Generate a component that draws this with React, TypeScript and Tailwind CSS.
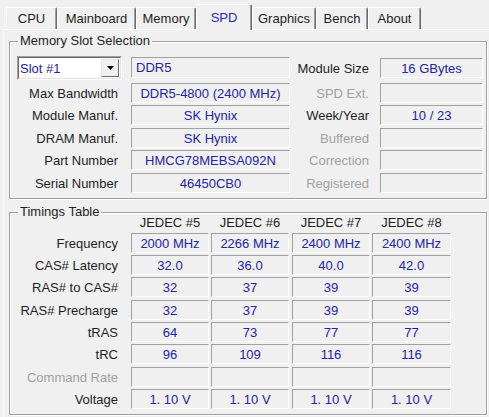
import React from 'react';
import clsx from 'clsx';

const tabs = [
  { label: 'CPU', w: 'w-[51px]' },
  { label: 'Mainboard', w: 'w-[79px]' },
  { label: 'Memory', w: 'w-[60px]' },
  { label: 'SPD', w: 'w-[56px]', active: true },
  { label: 'Graphics', w: 'w-[64px]' },
  { label: 'Bench', w: 'w-[52px]' },
  { label: 'About', w: 'w-[53px]' },
];

const slotRows = [
  { label: 'Max Bandwidth', value: 'DDR5-4800 (2400 MHz)', right: 'SPD Ext.', rightValue: '', dim: true, h: 'h-[22px]' },
  { label: 'Module Manuf.', value: 'SK Hynix', right: 'Week/Year', rightValue: '10 / 23', dim: false, h: 'h-[23px]' },
  { label: 'DRAM Manuf.', value: 'SK Hynix', right: 'Buffered', rightValue: '', dim: true, h: 'h-[22px]' },
  { label: 'Part Number', value: 'HMCG78MEBSA092N', right: 'Correction', rightValue: '', dim: true, h: 'h-[23px]' },
  { label: 'Serial Number', value: '46450CB0', right: 'Registered', rightValue: '', dim: true, h: 'h-[20px]' },
];

const cols = [
  { ml: 'ml-[13px]', w: 'w-[78px]', head: 'JEDEC #5' },
  { ml: 'ml-[2px]', w: 'w-[78px]', head: 'JEDEC #6' },
  { ml: 'ml-[3px]', w: 'w-[78px]', head: 'JEDEC #7' },
  { ml: 'ml-[2px]', w: 'w-[79px]', head: 'JEDEC #8' },
];

const timings = [
  { label: 'Frequency', vals: ['2000 MHz', '2266 MHz', '2400 MHz', '2400 MHz'], h: 'h-[22px]' },
  { label: 'CAS# Latency', vals: ['32.0', '36.0', '40.0', '42.0'], h: 'h-[22px]' },
  { label: 'RAS# to CAS#', vals: ['32', '37', '39', '39'], h: 'h-[23px]' },
  { label: 'RAS# Precharge', vals: ['32', '37', '39', '39'], h: 'h-[22px]' },
  { label: 'tRAS', vals: ['64', '73', '77', '77'], h: 'h-[22px]' },
  { label: 'tRC', vals: ['96', '109', '116', '116'], h: 'h-[23px]' },
  { label: 'Command Rate', vals: ['', '', '', ''], h: 'h-[22px]', dim: true },
  { label: 'Voltage', vals: ['1. 10 V', '1. 10 V', '1. 10 V', '1. 10 V'], h: 'h-[20px]' },
];

const Box: React.FC<{ className?: string; left?: boolean; children?: React.ReactNode }> = ({ className, left, children }) => (
  <div
    className={clsx(
      'flex items-center shrink-0 whitespace-nowrap border border-t-[#a0a0a0] border-l-[#a0a0a0] border-r-white border-b-white text-[#2323a8]',
      left ? 'pl-[4px]' : 'justify-center',
      className,
    )}
  >
    {children}
  </div>
);

const groupCls =
  'flex flex-col ml-[5px] w-[478px] border border-[#a0a0a0] shadow-[inset_1px_1px_0_#fff,1px_1px_0_#fff]';
const legendCls = 'ml-[8px] px-[2px] bg-[#f0f0f0] leading-[16px]';

export default function App() {
  return (
    <div className="w-[489px] h-[417px] overflow-hidden bg-[#f0f0f0] text-[13px] leading-none text-[#1e1e1e] font-['Liberation_Sans',Arial,sans-serif]">
      {/* tab strip */}
      <div className="flex items-end h-[29px] pl-[6px]">
        {tabs.map((t) =>
          t.active ? (
            <div
              key={t.label}
              className={clsx(
                t.w,
                'relative z-10 -mb-px h-[26px] flex items-center justify-center pb-[1px] bg-[#f0f0f0] border-t border-l border-r border-t-white border-l-white border-r-[#696969] shadow-[inset_-1px_0_0_#a0a0a0] rounded-t-[2px] text-[#2a2ab8]',
              )}
            >
              {t.label}
            </div>
          ) : (
            <div
              key={t.label}
              className={clsx(
                t.w,
                'h-[22px] flex items-center justify-center border-t border-l border-r border-t-white border-l-white border-r-[#696969] shadow-[inset_-1px_0_0_#a0a0a0] rounded-t-[2px]',
              )}
            >
              {t.label}
            </div>
          ),
        )}
      </div>

      {/* tab page */}
      <div className="ml-[3px] h-[388px] border-t border-l border-white">
        <fieldset className={clsx(groupCls, 'mt-[3px] h-[166px] pt-[7px]')}>
          <legend className={legendCls}>Memory Slot Selection</legend>

          <div className="flex items-start h-[27px]">
            <div className="ml-[7px] w-[105px] h-[24px] flex border border-t-[#a0a0a0] border-l-[#a0a0a0] border-r-white border-b-white">
              <div className="flex flex-1 p-[1px] border border-t-[#696969] border-l-[#696969] border-r-[#e3e3e3] border-b-[#e3e3e3] bg-white">
                <span className="flex-1 flex items-center text-[#2323a8]">Slot #1</span>
                <div className="w-[18px] flex items-center justify-center bg-[#f0f0f0] border border-t-[#e3e3e3] border-l-[#e3e3e3] border-r-[#696969] border-b-[#696969]">
                  <svg width="7" height="4" viewBox="0 0 7 4">
                    <polygon points="0,0 7,0 3.5,4" fill="#000" />
                  </svg>
                </div>
              </div>
            </div>
            <Box left className="ml-[9px] mt-[1px] w-[159px] h-[21px]">DDR5</Box>
            <div className="w-[79px] h-[21px] mt-[2px] flex items-center justify-end">Module Size</div>
            <Box className="ml-[11px] mt-[2px] w-[103px] h-[20px]">16 GBytes</Box>
          </div>

          {slotRows.map((r) => (
            <div key={r.label} className={clsx('flex items-start', r.h)}>
              <div className="w-[108px] h-[20px] flex items-center justify-end">{r.label}</div>
              <Box className="ml-[13px] w-[159px] h-[20px]">{r.value}</Box>
              <div className={clsx('w-[79px] h-[20px] flex items-center justify-end', r.dim && 'text-[#a0a0a0]')}>
                {r.right}
              </div>
              <Box className="ml-[11px] w-[103px] h-[20px]">{r.rightValue}</Box>
            </div>
          ))}
        </fieldset>

        <fieldset className={clsx(groupCls, 'mt-[5px] h-[211px]')}>
          <legend className={legendCls}>Timings Table</legend>

          <div className="flex items-center -mt-[8px] h-[21px]">
            <div className="w-[108px]" />
            {cols.map((c) => (
              <div key={c.head} className={clsx(c.ml, c.w, 'text-center')}>
                {c.head}
              </div>
            ))}
          </div>

          {timings.map((r) => (
            <div key={r.label} className={clsx('flex items-start', r.h)}>
              <div className={clsx('w-[108px] h-[20px] flex items-center justify-end', r.dim && 'text-[#a0a0a0]')}>
                {r.label}
              </div>
              {cols.map((c, i) => (
                <Box key={c.head} className={clsx(c.ml, c.w, 'h-[20px]')}>
                  {r.vals[i]}
                </Box>
              ))}
            </div>
          ))}
        </fieldset>
      </div>
    </div>
  );
}
